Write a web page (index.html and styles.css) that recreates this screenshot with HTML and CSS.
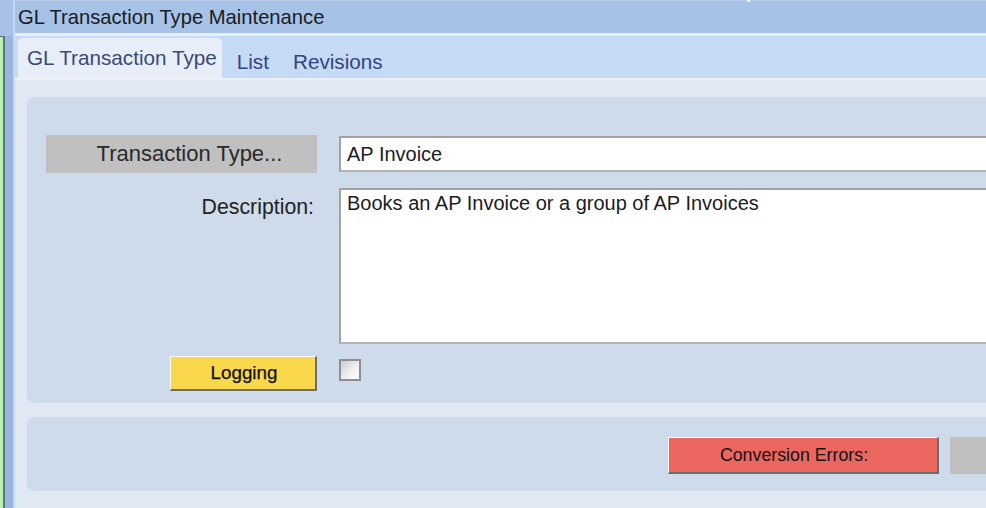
FILE: index.html
```html
<!DOCTYPE html>
<html>
<head>
<meta charset="utf-8">
<link rel="stylesheet" href="styles.css">
</head>
<body>
<div class="app">
  <div class="side">
    <div class="side-top"></div>
    <div class="side-bottom">
      <div class="s-green"></div>
      <div class="s-dark"></div>
      <div class="s-blue"></div>
      <div class="s-light"></div>
    </div>
  </div>
  <div class="main">
    <div class="titlebar">GL Transaction Type Maintenance<span class="spark"></span></div>
    <div class="tabstrip">
      <div class="tab active">GL Transaction Type</div>
      <div class="tab">List</div>
      <div class="tab">Revisions</div>
    </div>
    <div class="content">
      <div class="panel form">
        <div class="lbl-btn">Transaction Type...</div>
        <div class="field input">AP Invoice</div>
        <div class="lbl">Description:</div>
        <div class="field textarea">Books an AP Invoice or a group of AP Invoices</div>
        <div class="btn logging">Logging</div>
        <div class="checkbox"></div>
      </div>
      <div class="panel footer">
        <div class="btn conv">Conversion Errors:</div>
        <div class="gray-btn"></div>
      </div>
    </div>
  </div>
</div>
</body>
</html>
```
FILE: styles.css
```css
html, body {
  margin: 0;
  padding: 0;
  width: 986px;
  height: 508px;
  overflow: hidden;
  font-family: "Liberation Sans", Arial, sans-serif;
  background: #e0e8f3;
}
.app {
  display: flex;
  height: 508px;
  width: 986px;
  overflow: hidden;
}
.side {
  width: 15px;
  flex: none;
  display: flex;
  flex-direction: column;
}
.side-top {
  height: 36px;
  background: #a7c2e6;
  border-right: 2px solid #c4d5ec;
  box-sizing: border-box;
}
.side-bottom {
  flex: 1;
  display: flex;
}
.s-green {
  width: 3px;
  background: #b8f2b0;
  border-top: 1px solid #5a6670;
}
.s-dark {
  width: 2px;
  background: #66707c;
}
.s-blue {
  width: 8px;
  background: #9bb6de;
}
.s-light {
  width: 2px;
  background: #c6d6ec;
}
.main {
  flex: 1;
  min-width: 0;
  display: flex;
  flex-direction: column;
}
.titlebar {
  position: relative;
  height: 32px;
  background: #a6c2e6;
  border-top: 1px solid #b9cdea;
  border-bottom: 3px solid #e9eef5;
  padding-left: 3px;
  font-size: 20.2px;
  line-height: 32px;
  color: #1b1b1e;
  white-space: nowrap;
}
.spark {
  position: absolute;
  left: 732px;
  top: -1px;
  width: 3px;
  height: 2px;
  background: #f4efe4;
}
.tabstrip {
  height: 42px;
  background: #c5dbf5;
  border-bottom: 2px solid #edf1f6;
  display: flex;
  align-items: flex-start;
  padding-left: 3px;
}
.tab {
  font-size: 20.7px;
  line-height: 22px;
  color: #31457f;
  padding: 15px 12px 0 12px;
  white-space: nowrap;
}
.tab.active {
  margin-top: 2px;
  height: 40px;
  box-sizing: border-box;
  padding: 9px 5px 0 9px;
  margin-right: 3px;
  background: #e7eef8;
  border-radius: 5px 5px 0 0;
  color: #3a4a78;
}
.content {
  flex: 1;
  padding: 17px 0 0 12px;
  margin-right: -40px;
  display: flex;
  flex-direction: column;
  gap: 14px;
}
.panel {
  background: #cedbeb;
  border-radius: 7px;
}
.form {
  height: 306px;
  box-sizing: border-box;
  padding: 38px 10px 12px 19px;
  display: grid;
  grid-template-columns: 271px 1fr;
  grid-template-rows: 38px 156px 35px;
  column-gap: 22px;
  row-gap: 15px;
}
.lbl-btn {
  background: #c0c0c0;
  font-size: 22px;
  color: #2a2a2a;
  display: flex;
  align-items: center;
  justify-content: center;
  padding-left: 16px;
}
.field {
  background: #fff;
  border: 2px solid #b3b3b3;
  border-top-color: #a2a2a2;
  border-left-color: #a2a2a2;
  font-size: 20px;
  color: #1c1c24;
  padding: 0 6px;
  box-sizing: border-box;
  white-space: nowrap;
}
.input {
  height: 36px;
  align-self: center;
  display: flex;
  align-items: center;
}
.lbl {
  font-size: 21.3px;
  line-height: 24px;
  color: #222;
  text-align: right;
  padding-top: 7px;
  padding-right: 3px;
}
.textarea {
  line-height: 22px;
  padding-top: 2px;
}
.form .logging {
  margin-top: -3px;
}
.btn {
  box-sizing: border-box;
  border-top: 1px solid #fbfbfb;
  border-left: 1px solid #fbfbfb;
  border-right: 2px solid #6d6d6d;
  border-bottom: 2px solid #6d6d6d;
  display: flex;
  align-items: center;
  justify-content: center;
  color: #111;
}
.logging {
  justify-self: end;
  width: 147px;
  height: 35px;
  background: #f9d84b;
  font-size: 18.8px;
  padding-left: 2px;
  -webkit-text-stroke: 0.25px #111;
}
.checkbox {
  width: 22px;
  height: 22px;
  box-sizing: border-box;
  border: 2px solid #8e8e8e;
  background: linear-gradient(135deg, #cdcdcd 0%, #f2f2f2 60%, #ffffff 100%);
}
.footer {
  height: 74px;
  box-sizing: border-box;
  padding: 20px 0 0 641px;
  display: flex;
  align-items: flex-start;
  gap: 11px;
}
.conv {
  width: 271px;
  height: 37px;
  flex: none;
  background: #ec6660;
  font-size: 17.8px;
  padding-right: 18px;
}
.gray-btn {
  width: 271px;
  height: 37px;
  flex: none;
  background: #c0c0c0;
}
```
